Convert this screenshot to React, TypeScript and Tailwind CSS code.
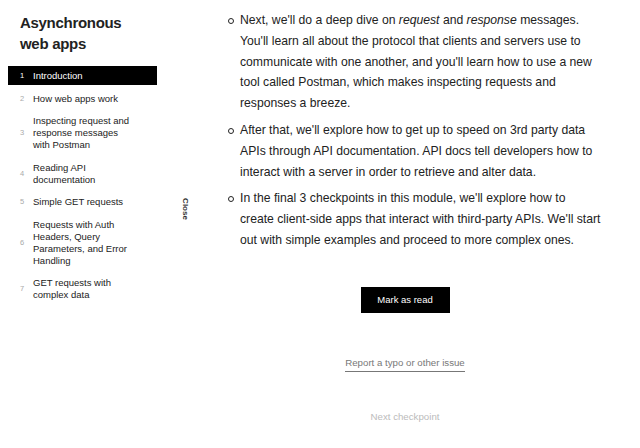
import React from 'react';

const lessons = [
  { n: 1, label: 'Introduction', active: true },
  { n: 2, label: 'How web apps work' },
  { n: 3, label: 'Inspecting request and response messages with Postman' },
  { n: 4, label: 'Reading API documentation' },
  { n: 5, label: 'Simple GET requests' },
  { n: 6, label: 'Requests with Auth Headers, Query Parameters, and Error Handling' },
  { n: 7, label: 'GET requests with complex data' },
];

function Bullet({ children }: { children: React.ReactNode }) {
  return (
    <li className="flex gap-[6px]">
      <span className="mt-[8px] h-[6px] w-[6px] flex-shrink-0 rounded-full border border-[#222]" />
      <span className="whitespace-nowrap">{children}</span>
    </li>
  );
}

export default function App() {
  return (
    <div
      className="flex h-[448px] w-[640px] overflow-hidden bg-white text-[#1a1a1a]"
      style={{ fontFamily: '"Liberation Sans", Arial, sans-serif' }}
    >
      {/* Sidebar */}
      <aside className="w-[165px] flex-shrink-0 pt-[12px]">
        <h1 className="px-[20px] text-[15px] font-bold leading-[21px] tracking-[-0.3px] text-[#222]">
          Asynchronous
          <br />
          web apps
        </h1>
        <nav className="mt-[12px] flex flex-col gap-[4.5px] px-[8px]">
          {lessons.map(l => (
            <div
              key={l.n}
              className={`flex items-center gap-[8px] pl-[12px] text-[9.5px] leading-[12px] ${
                l.active ? 'bg-black py-[3.5px] text-white' : 'py-[3px] text-[#222]'
              }`}
            >
              <span className={`w-[5px] text-[7.5px] ${l.active ? 'text-white' : 'text-[#aaa]'}`}>{l.n}</span>
              <span className="w-[100px]">{l.label}</span>
            </div>
          ))}
        </nav>
      </aside>

      {/* Close toggle */}
      <div className="flex w-[40px] flex-shrink-0 items-start justify-center pt-[203px]">
        <span className="rotate-90 text-[8px] font-bold text-[#333]">Close</span>
      </div>

      {/* Main content */}
      <main className="w-[400px] flex-shrink-0 pt-[10px]">
        <ul className="flex flex-col gap-[6px] pl-[23px] text-[12.2px] leading-[20.8px] text-[#222]">
          <Bullet>
            Next, we'll do a deep dive on <em>request</em> and <em>response</em> messages.
            <br />
            You'll learn all about the protocol that clients and servers use to
            <br />
            communicate with one another, and you'll learn how to use a new
            <br />
            tool called Postman, which makes inspecting requests and
            <br />
            responses a breeze.
          </Bullet>
          <Bullet>
            After that, we'll explore how to get up to speed on 3rd party data
            <br />
            APIs through API documentation. API docs tell developers how to
            <br />
            interact with a server in order to retrieve and alter data.
          </Bullet>
          <Bullet>
            In the final 3 checkpoints in this module, we'll explore how to
            <br />
            create client-side apps that interact with third-party APIs. We'll start
            <br />
            out with simple examples and proceed to more complex ones.
          </Bullet>
        </ul>

        <div className="mt-[36px] flex flex-col items-center">
          <button className="h-[26px] w-[89px] bg-black text-[9.5px] text-white">Mark as read</button>
          <a className="mt-[43px] border-b border-[#777] pb-[1px] text-[9.7px] text-[#777]">
            Report a typo or other issue
          </a>
          <span className="mt-[38px] text-[9.7px] text-[#bbb]">Next checkpoint</span>
        </div>
      </main>
    </div>
  );
}
